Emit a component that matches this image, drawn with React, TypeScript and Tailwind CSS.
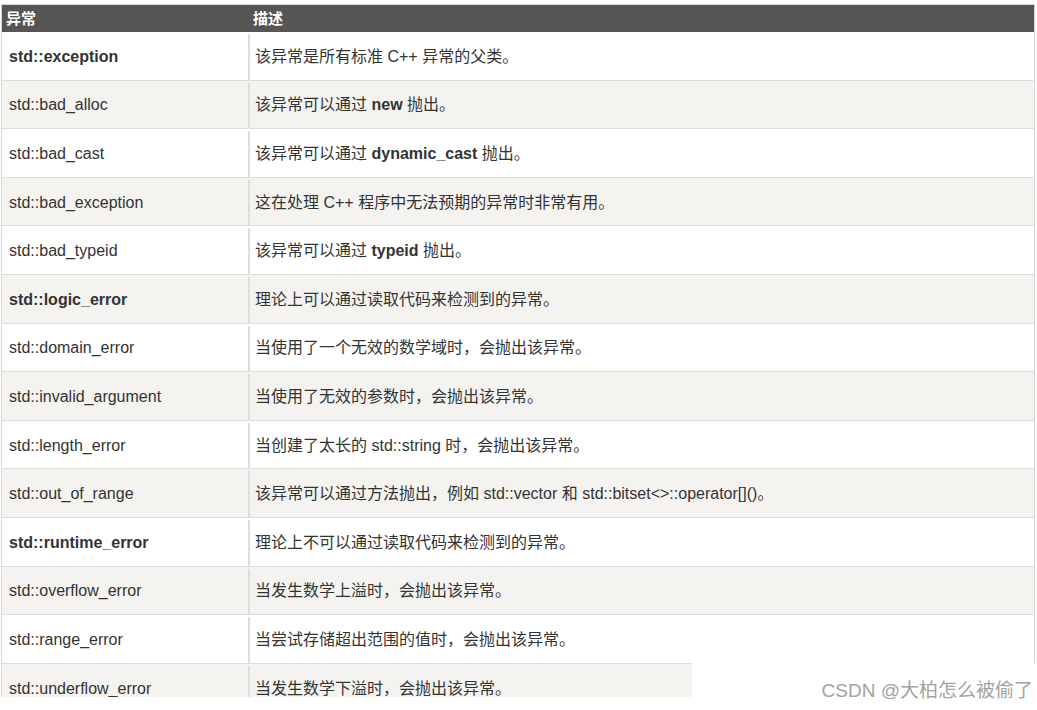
const rows: { name: string; desc: string; strong?: boolean }[] = [
  { name: 'std::exception', desc: '该异常是所有标准 C++ 异常的父类。', strong: true },
  { name: 'std::bad_alloc', desc: '该异常可以通过 **new** 抛出。' },
  { name: 'std::bad_cast', desc: '该异常可以通过 **dynamic_cast** 抛出。' },
  { name: 'std::bad_exception', desc: '这在处理 C++ 程序中无法预期的异常时非常有用。' },
  { name: 'std::bad_typeid', desc: '该异常可以通过 **typeid** 抛出。' },
  { name: 'std::logic_error', desc: '理论上可以通过读取代码来检测到的异常。', strong: true },
  { name: 'std::domain_error', desc: '当使用了一个无效的数学域时，会抛出该异常。' },
  { name: 'std::invalid_argument', desc: '当使用了无效的参数时，会抛出该异常。' },
  { name: 'std::length_error', desc: '当创建了太长的 std::string 时，会抛出该异常。' },
  { name: 'std::out_of_range', desc: '该异常可以通过方法抛出，例如 std::vector 和 std::bitset<>::operator[]()。' },
  { name: 'std::runtime_error', desc: '理论上不可以通过读取代码来检测到的异常。', strong: true },
  { name: 'std::overflow_error', desc: '当发生数学上溢时，会抛出该异常。' },
  { name: 'std::range_error', desc: '当尝试存储超出范围的值时，会抛出该异常。' },
  { name: 'std::underflow_error', desc: '当发生数学下溢时，会抛出该异常。' },
]

// split into CJK / latin runs so the CJK glyphs can be sized on their own
function Mixed({ text }: { text: string }) {
  const parts = text.split(/([\u3000-\u303f\u4e00-\u9fff\uff00-\uffef]+)/)
  return (
    <>
      {parts.map((p, i) =>
        i % 2 === 1 ? (
          <span key={i} className="text-[16px]">
            {p}
          </span>
        ) : (
          <span key={i}>{p}</span>
        ),
      )}
    </>
  )
}

function Desc({ text }: { text: string }) {
  const parts = text.split('**')
  return (
    <>
      {parts.map((p, i) =>
        i % 2 === 1 ? (
          <b key={i} className="font-bold">
            {p}
          </b>
        ) : (
          <Mixed key={i} text={p} />
        ),
      )}
    </>
  )
}

export default function App() {
  return (
    <div
      className="relative h-[710px] w-[1037px] overflow-hidden bg-white text-[16px] text-[#333]"
      style={{ fontFamily: '"Liberation Sans", Arial, "Noto Sans CJK SC", sans-serif' }}
    >
      <div className="h-[697px] overflow-hidden pt-[4px]">
        <div className="ml-[1px] w-[1034px] border-x border-t border-[#d6d6d6]">
          <div className="flex h-[27px] items-center bg-[#555] pt-[1px] text-[15px] font-bold text-white">
            <div className="w-[248px] pl-[4px]">异常</div>
            <div className="pl-[3px]">描述</div>
          </div>
          {rows.map((r, i) => (
            <div
              key={r.name}
              className={`flex h-[48.6px] border-b border-[#ddd] pt-[2px] ${i % 2 === 1 ? 'bg-[#f4f3f0]' : 'bg-white'}`}
            >
              <div className={`flex w-[248px] items-center border-r-2 border-[#ddd] pl-[7px] ${r.strong ? 'font-bold' : ''}`}>
                {r.name}
              </div>
              <div className="flex flex-1 items-center whitespace-pre pl-[5px]">
                <Desc text={r.desc} />
              </div>
            </div>
          ))}
        </div>
      </div>
      <div className="absolute bottom-0 left-[692px] right-0 top-[663px] bg-white">
        <div className="absolute bottom-[5px] right-[4px] text-[19px] text-[#a3a3a3]">CSDN @大柏怎么被偷了</div>
      </div>
    </div>
  )
}
